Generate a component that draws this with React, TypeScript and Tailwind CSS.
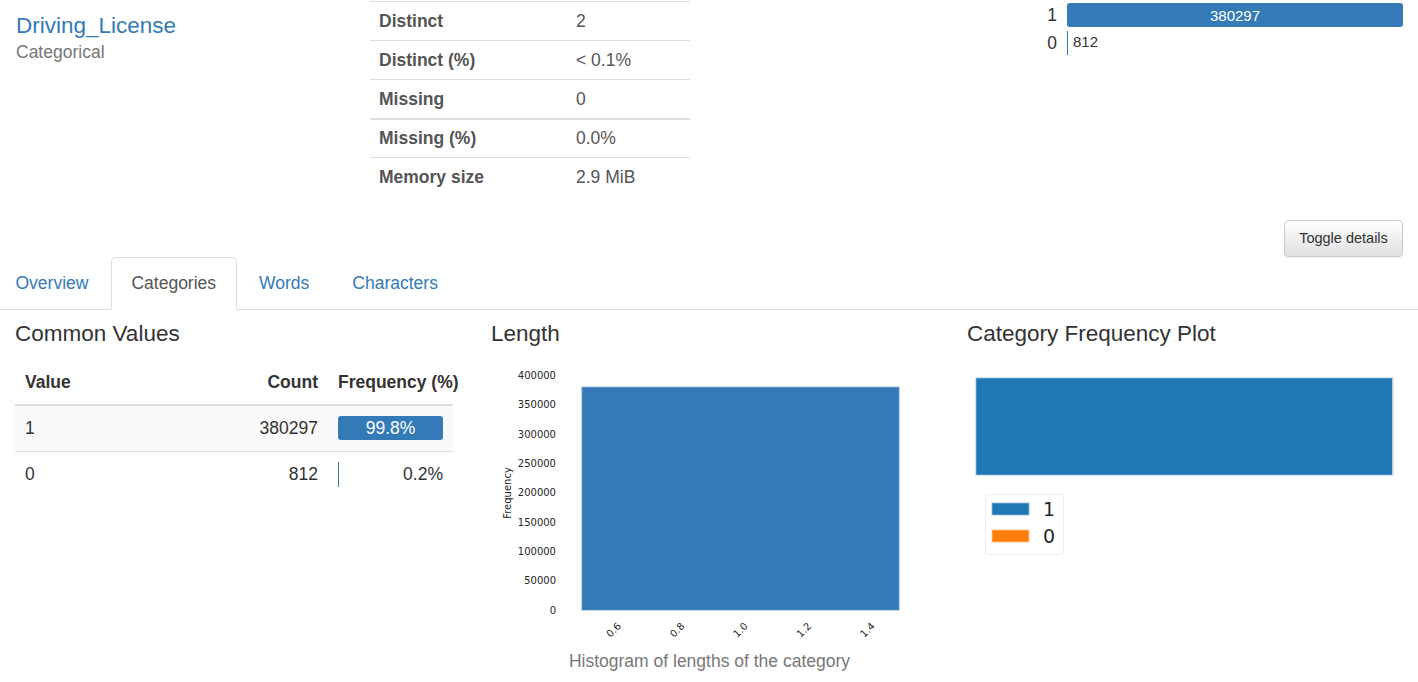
import React from 'react';

const stats = [
  { label: 'Distinct', value: '2' },
  { label: 'Distinct (%)', value: '< 0.1%' },
  { label: 'Missing', value: '0' },
  { label: 'Missing (%)', value: '0.0%' },
  { label: 'Memory size', value: '2.9 MiB' },
];

const tabs = ['Overview', 'Categories', 'Words', 'Characters'];

const yTicks = [0, 50000, 100000, 150000, 200000, 250000, 300000, 350000, 400000];
const xTicks = [0.6, 0.8, 1.0, 1.2, 1.4];

const LengthChart: React.FC = () => {
  const y0 = 249;
  const perUnit = 29.3 / 50000;
  const barTop = y0 - 380297 * perUnit;
  const xOf = (v: number) => 91 + (v - 0.5) * 317;
  return (
    <svg width="430" height="288" className="block" fontFamily="'DejaVu Sans', sans-serif">
      <rect x="91" y={barTop} width="317" height={y0 - barTop} fill="#337ab7" stroke="#5b95c7" strokeWidth="0.8" />
      {yTicks.map((t) => (
        <text key={t} x="65" y={y0 - t * perUnit} fontSize="10" fill="#262626" textAnchor="end" dominantBaseline="central">
          {t}
        </text>
      ))}
      <text x="16" y="132" fontSize="10" fill="#262626" textAnchor="middle" dominantBaseline="central" transform="rotate(-90 16 132)">
        Frequency
      </text>
      {xTicks.map((t) => {
        const x = xOf(t);
        return (
          <text key={t} x={x} y="269" fontSize="10" fill="#262626" textAnchor="middle" dominantBaseline="central" transform={`rotate(-45 ${x} 269)`}>
            {t.toFixed(1)}
          </text>
        );
      })}
    </svg>
  );
};

const CategoryPlot: React.FC = () => (
  <svg width="451" height="200" className="block" fontFamily="'DejaVu Sans', sans-serif">
    <rect x="9" y="17" width="417" height="97" fill="#1f77b4" stroke="#8fbbd9" strokeWidth="0.8" />
    <line x1="425.8" y1="17" x2="425.8" y2="114" stroke="#ffe8d2" strokeWidth="1" />
    <rect x="18.5" y="133.5" width="78" height="60" rx="3" fill="#fff" stroke="#ececec" />
    <rect x="25" y="142" width="37" height="12" fill="#1f77b4" stroke="#8fbbd9" strokeWidth="0.8" />
    <rect x="25" y="169" width="37" height="12" fill="#ff7f0e" stroke="#ffbf86" strokeWidth="0.8" />
    <text x="76" y="148" fontSize="19" fill="#262626" dominantBaseline="central">1</text>
    <text x="76" y="175" fontSize="19" fill="#262626" dominantBaseline="central">0</text>
  </svg>
);

export default function App() {
  return (
    <div className="w-[1418px] h-[682px] overflow-hidden bg-white font-['Liberation_Sans',Arial,sans-serif] text-[17.5px] leading-[25px] text-[#333]">
      {/* Header: name, stats, mini chart */}
      <div className="flex h-[220px]">
        <div className="w-[370px] pl-4 pt-[14px]">
          <div className="text-[22.5px] leading-[1.1] text-[#337ab7]">Driving_License</div>
          <div className="mt-px text-[#777]">Categorical</div>
        </div>
        <div className="w-[320px] pt-px text-[#555]">
          {stats.map((s, i) => (
            <div
              key={s.label}
              className={`flex h-[39px] items-center border-[#ddd] ${i === 3 ? 'border-t-2' : 'border-t'}`}
            >
              <div className="w-[206px] pl-[9px] font-bold">{s.label}</div>
              <div>{s.value}</div>
            </div>
          ))}
        </div>
        <div className="flex-1 flex justify-end pr-[15px] pt-[3px]">
          <div className="w-[363px] flex flex-col gap-1">
            <div className="flex h-6 items-center gap-[10px]">
              <div className="w-[17px] text-right">1</div>
              <div className="flex-1 h-6 rounded-[3px] bg-[#337ab7] text-white text-[15px] flex items-center justify-center">
                380297
              </div>
            </div>
            <div className="flex h-6 items-center gap-[10px]">
              <div className="w-[17px] text-right">0</div>
              <div className="flex-1 h-6 flex items-center">
                <div className="w-px h-6 bg-[#337ab7]" />
                <span className="ml-[5px] -mt-[3px] text-[15px]">812</span>
              </div>
            </div>
          </div>
        </div>
      </div>

      {/* Toggle button */}
      <div className="flex justify-end pr-[15px] h-[37px]">
        <button className="w-[119px] h-[37px] rounded-[4px] border border-[#ccc] bg-gradient-to-b from-white to-[#e0e0e0] text-[14.5px] text-[#333] shadow-[0_1px_1px_rgba(0,0,0,0.075)]">
          Toggle details
        </button>
      </div>

      {/* Tabs */}
      <ul className="flex h-[53px] border-b border-[#ddd] -ml-[5px]">
        {tabs.map((t) => {
          const active = t === 'Categories';
          return (
            <li
              key={t}
              className={`h-[53px] px-[19.5px] mr-[2px] flex items-center rounded-t-[5px] border ${
                active ? 'border-[#ddd] border-b-white bg-white text-[#555]' : 'border-transparent text-[#337ab7]'
              }`}
            >
              {t}
            </li>
          );
        })}
      </ul>

      {/* Detail columns */}
      <div className="grid grid-cols-[476px_476px_1fr]">
        <div className="pl-[15px]">
          <h4 className="mt-[12px] text-[22.5px] leading-[1.1]">Common Values</h4>
          <div className="mt-[14px] w-[438px]">
            <div className="flex h-[45px] items-center border-b-2 border-[#ddd] font-bold">
              <div className="flex-1 pl-[10px]">Value</div>
              <div className="w-[100px] pr-[10px] text-right">Count</div>
              <div className="w-[125px] pl-[10px] whitespace-nowrap">Frequency (%)</div>
            </div>
            <div className="flex h-[45px] items-center bg-[#f9f9f9]">
              <div className="flex-1 pl-[10px]">1</div>
              <div className="w-[100px] pr-[10px] text-right">380297</div>
              <div className="w-[125px] px-[10px]">
                <div className="h-6 rounded-[3px] bg-[#337ab7] text-white flex items-center justify-center">99.8%</div>
              </div>
            </div>
            <div className="flex h-[46px] items-center border-t border-[#ddd]">
              <div className="flex-1 pl-[10px]">0</div>
              <div className="w-[100px] pr-[10px] text-right">812</div>
              <div className="w-[125px] px-[10px] flex items-center">
                <div className="w-px h-[25px] bg-[#337ab7]" />
                <div className="flex-1 text-right">0.2%</div>
              </div>
            </div>
          </div>
        </div>
        <div className="pl-[15px]">
          <h4 className="mt-[12px] text-[22.5px] leading-[1.1]">Length</h4>
          <div className="mt-[14px]">
            <LengthChart />
          </div>
          <div className="w-[437px] text-center text-[#777]">Histogram of lengths of the category</div>
        </div>
        <div className="pl-[15px]">
          <h4 className="mt-[12px] text-[22.5px] leading-[1.1]">Category Frequency Plot</h4>
          <div className="mt-[14px]">
            <CategoryPlot />
          </div>
        </div>
      </div>
    </div>
  );
}
